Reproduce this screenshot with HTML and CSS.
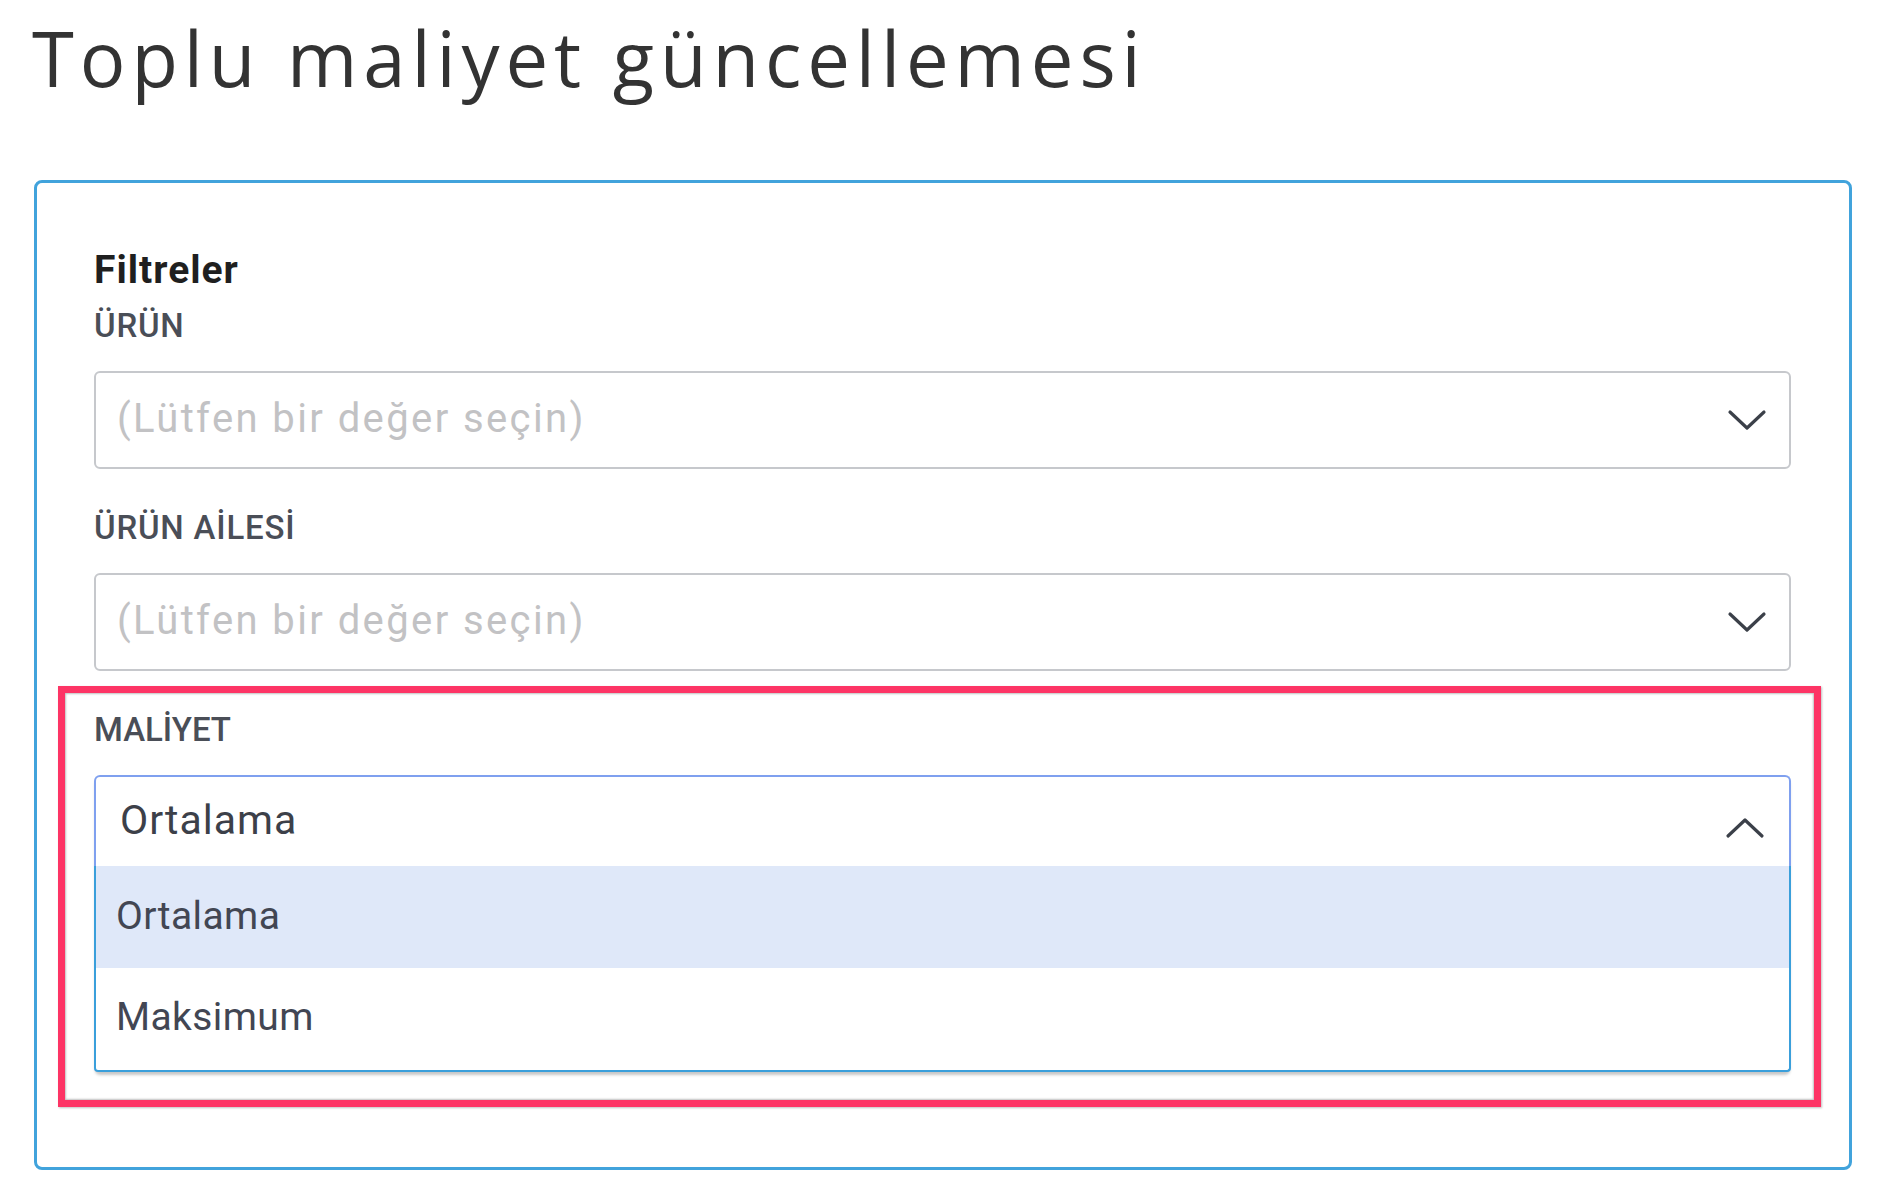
FILE: index.html
```html
<!DOCTYPE html>
<html lang="tr">
<head>
<meta charset="utf-8">
<title>Toplu maliyet güncellemesi</title>
<link rel="stylesheet" href="styles.css">
</head>
<body>
<h1 class="page-title">Toplu maliyet güncellemesi</h1>
<section class="card">
  <h2 class="section-title">Filtreler</h2>
  <div class="field">
    <div class="field-label">ÜRÜN</div>
    <div class="select">
      <span class="placeholder">(Lütfen bir değer seçin)</span>
      <svg class="chevron" width="40" height="22" viewBox="0 0 40 22"><path d="M3 3 L20 19 L37 3" fill="none" stroke="#3b4049" stroke-width="3.2" stroke-linecap="round" stroke-linejoin="round"/></svg>
    </div>
  </div>
  <div class="field">
    <div class="field-label">ÜRÜN AİLESİ</div>
    <div class="select">
      <span class="placeholder">(Lütfen bir değer seçin)</span>
      <svg class="chevron" width="40" height="22" viewBox="0 0 40 22"><path d="M3 3 L20 19 L37 3" fill="none" stroke="#3b4049" stroke-width="3.2" stroke-linecap="round" stroke-linejoin="round"/></svg>
    </div>
  </div>
  <div class="field field-highlight">
    <div class="field-label label-narrow">MALİYET</div>
    <div class="dropdown">
      <div class="dropdown-head">
        <span class="value">Ortalama</span>
        <svg class="chevron chevron-up" width="40" height="22" viewBox="0 0 40 22"><path d="M3 19 L20 3 L37 19" fill="none" stroke="#3b4049" stroke-width="3.2" stroke-linecap="round" stroke-linejoin="round"/></svg>
      </div>
      <ul class="dropdown-list">
        <li class="option option-active">Ortalama</li>
        <li class="option">Maksimum</li>
      </ul>
    </div>
  </div>
</section>
</body>
</html>
```
FILE: styles.css
```css
* { box-sizing: border-box; }

html, body {
  margin: 0;
  padding: 0;
  background: #ffffff;
}

body {
  font-family: Roboto, "Liberation Sans", sans-serif;
  color: #3c4049;
}

.page-title {
  margin: 0;
  padding: 13px 0 0 32px;
  font-family: "Open Sans", "Noto Sans", sans-serif;
  font-weight: 400;
  font-size: 76px;
  line-height: 90px;
  letter-spacing: 5.9px;
  color: #333333;
}

.card {
  margin: 77px 0 0 34px;
  width: 1818px;
  border: 3px solid #41a3dc;
  border-radius: 8px;
  padding: 64px 58px 95px 57px;
}

.section-title {
  margin: 0 0 13px 0;
  font-size: 39px;
  font-weight: 700;
  line-height: 46px;
  letter-spacing: 1px;
  color: #1f1f1f;
}

.field {
  margin-bottom: 39px;
}

.field:last-child {
  margin-bottom: 0;
}

.field-label {
  font-size: 33px;
  font-weight: 500;
  line-height: 40px;
  letter-spacing: 0.8px;
  color: #4a4e57;
  margin-bottom: 25px;
}

.label-narrow {
  letter-spacing: 0;
}

.select {
  height: 98px;
  border: 2px solid #c6c8cc;
  border-radius: 6px;
  display: flex;
  align-items: center;
  justify-content: space-between;
  padding: 0 22px 4px 21px;
}

.placeholder {
  font-size: 40px;
  letter-spacing: 2.4px;
  color: #c2c2c4;
}

.chevron {
  display: block;
  flex: none;
}

.select .chevron {
  margin-top: 4px;
}

.field-highlight {
  position: relative;
}

.field-highlight::after {
  content: "";
  position: absolute;
  top: -24px;
  left: -36px;
  right: -30px;
  bottom: -35px;
  border: 7px solid #fd3465;
  box-shadow: inset 0 0 2px 1px rgba(0, 0, 0, 0.25), 1px 1px 2px rgba(0, 0, 0, 0.25);
  pointer-events: none;
}

.dropdown {
  box-shadow: 0 4px 3px -1px rgba(0, 0, 0, 0.22);
  border-radius: 6px;
}

.dropdown-head {
  height: 91px;
  border: 2px solid #7fa0ef;
  border-bottom: none;
  border-radius: 6px 6px 0 0;
  display: flex;
  align-items: center;
  justify-content: space-between;
  padding: 0 24px 4px 24px;
}

.value {
  font-size: 41px;
  letter-spacing: 1px;
  color: #3c4049;
}

.chevron-up {
  margin-top: 16px;
}

.dropdown-list {
  list-style: none;
  margin: 0;
  padding: 0;
  border: 2px solid #3a9fdb;
  border-top: none;
  border-radius: 0 0 4px 4px;
}

.option {
  height: 102px;
  display: flex;
  align-items: center;
  padding: 0 20px 4px 20px;
  font-size: 39px;
  letter-spacing: 0.4px;
  color: #424653;
}

.option-active {
  background: #dfe8f9;
  padding-top: 2px;
}
```
